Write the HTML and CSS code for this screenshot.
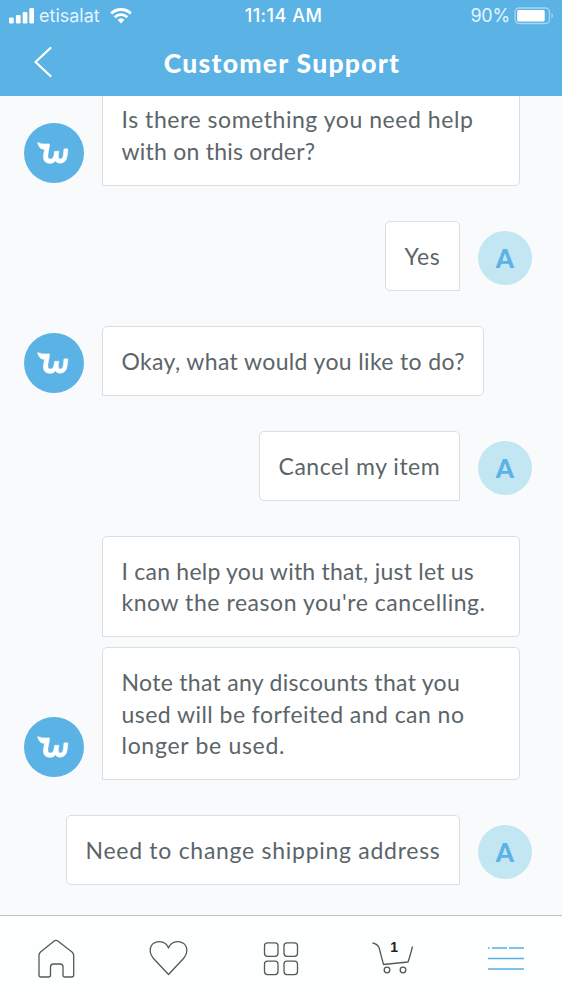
FILE: index.html
```html
<!DOCTYPE html>
<html lang="en">
<head>
<meta charset="utf-8">
<title>Customer Support</title>
<link rel="stylesheet" href="styles.css">
</head>
<body>
<svg class="defs" aria-hidden="true">
  <symbol id="wish" viewBox="0 0 60 60">
    <path d="M13.600 19.400 Q18.500 21.500 24.600 20.700 Q26 20.800 25.600 22.500 L24 31.500 Q23.500 36 26.300 36 Q29.400 36 30 31.500 L30.500 28.300 H35 L34.500 32 Q34 36 36.500 36 Q38.800 36 39.300 32 L39.800 26.300 Q41.500 25 44 26 L43.400 32 Q42.500 40.300 36 40.300 Q32.800 40.300 31.500 38 Q29.300 40.700 25.500 40.500 Q18.500 40 19.400 32 L20.500 26.500 Q14.500 26 13.600 19.400Z" fill="#fff" stroke="#fff" stroke-width=".4" stroke-linejoin="round"/>
  </symbol>
</svg>
<div class="screen">
  <header class="header">
    <div class="status">
      <div class="carrier">
        <svg class="signal" viewBox="0 0 26 16"><g fill="#fff"><rect x="0" y="9.500" width="4.700" height="6" rx="1.300"/><rect x="6.900" y="7" width="4.700" height="8.500" rx="1.300"/><rect x="13.700" y="4" width="4.700" height="11.500" rx="1.300"/><rect x="20.300" y="0" width="4.700" height="15.500" rx="1.300"/></g></svg>
        <span class="carrier-name">etisalat</span>
        <svg class="wifi" viewBox="0 0 22 16"><g fill="none" stroke="#fff" stroke-width="2.900"><path d="M1.200 5.500 A14 14 0 0 1 20.800 5.500"/><path d="M4.700 9.200 A9 9 0 0 1 17.300 9.200"/></g><path d="M7.500 11.800 Q11 8.800 14.500 11.800 L11 15.500Z" fill="#fff"/></svg>
      </div>
      <div class="clock">11:14 AM</div>
      <div class="power">
        <span class="percent">90%</span>
        <svg class="battery" viewBox="0 0 41 18"><rect x="1" y="1" width="34.500" height="15.500" rx="4" fill="none" stroke="#a6d6f4" stroke-width="1.300"/><rect x="3.200" y="3" width="27.500" height="11.500" rx="1.500" fill="#fff"/><path d="M37.500 6 Q40.500 8.800 37.500 11.500Z" fill="#a6d6f4"/></svg>
      </div>
    </div>
    <div class="titlebar">
      <svg class="back" viewBox="0 0 20 32"><path d="M17.500 2 L2.500 16 L17.500 30" fill="none" stroke="#fff" stroke-width="2.300" stroke-linecap="round" stroke-linejoin="round"/></svg>
      <h1 class="title">Customer Support</h1>
    </div>
  </header>
  <main class="chat">
    <div class="row bot">
      <div class="avatar brand"><svg><use href="#wish"/></svg></div>
      <div class="group"><p class="bubble wide"><span class="loose">Is there something you need help</span><br><span class="tight">with on this order?</span></p></div>
    </div>
    <div class="row user">
      <p class="bubble yes">Yes</p>
      <div class="avatar initial">A</div>
    </div>
    <div class="row bot">
      <div class="avatar brand"><svg><use href="#wish"/></svg></div>
      <div class="group"><p class="bubble question">Okay, what would you like to do?</p></div>
    </div>
    <div class="row user">
      <p class="bubble cancel">Cancel my item</p>
      <div class="avatar initial">A</div>
    </div>
    <div class="row bot">
      <div class="avatar brand"><svg><use href="#wish"/></svg></div>
      <div class="group">
        <p class="bubble wide"><span class="tight">I can help you with that, just let us</span><br><span class="loose">know the reason you're cancelling.</span></p>
        <p class="bubble wide"><span class="normal">Note that any discounts that you</span><br><span class="open">used will be forfeited and can no</span><br><span class="looser">longer be used.</span></p>
      </div>
    </div>
    <div class="row user">
      <p class="bubble address">Need to change shipping address</p>
      <div class="avatar initial">A</div>
    </div>
  </main>
  <nav class="tabs">
    <div class="tab"><svg viewBox="0 -4.500 112 84"><path d="M54.200 20.500 Q56 19.300 57.800 20.500 L72 31.500 Q73.700 33 73.700 35 V54.500 Q73.700 56.500 71.700 56.500 H65 Q63 56.500 63 54.500 V46.500 Q63 43.500 60 43.500 H53.500 Q50.500 43.500 50.500 46.500 V54.500 Q50.500 56.500 48.500 56.500 H41 Q39 56.500 39 54.500 V35 Q39 33 40.500 31.500Z"/></svg></div>
    <div class="tab"><svg viewBox="0 -4.500 112 84"><path d="M56.500 54 L41.500 38 C36.500 32 37.500 25 42.500 22.300 C48 19.500 54 21.500 56.500 27.500 C59 21.500 65 19.500 70.500 22.300 C75.500 25 76.500 32 71.500 38Z"/></svg></div>
    <div class="tab"><svg viewBox="0 -4.500 112 84"><rect x="39.500" y="22.300" width="13.500" height="13.500" rx="3"/><rect x="59" y="22.300" width="13.500" height="13.500" rx="3"/><rect x="39.500" y="40.600" width="13.500" height="13.500" rx="3"/><rect x="59" y="40.600" width="13.500" height="13.500" rx="3"/></svg></div>
    <div class="tab cart"><svg viewBox="0 -4.500 112 84"><path d="M35.500 22.500 Q40.500 23.500 42 27 L46.500 44 L71 41.500 Q73 36 75.500 26"/><circle cx="50" cy="49.500" r="2.800"/><circle cx="66" cy="49.500" r="2.800"/></svg><span class="count">1</span></div>
    <div class="tab menu"><svg viewBox="0 -5 112 84"><path d="M38 27 H39.500 M42 27 H57 M59 27 H74 M38 37.500 H74 M38 48 H74"/></svg></div>
  </nav>
</div>
</body>
</html>
```
FILE: styles.css
```css
* { box-sizing: border-box; }
body { margin: 0; }
.defs { display: none; }
.screen {
  width: 562px;
  height: 1000px;
  display: flex;
  flex-direction: column;
  overflow: hidden;
  background: #f8fafc;
  font-family: Lato, "Open Sans", sans-serif;
}
.header {
  height: 96px;
  flex: none;
  background: #5bb2e5;
  color: #fff;
  z-index: 1;
}
.status {
  height: 32px;
  padding: 0 7px 0 9px;
  display: grid;
  grid-template-columns: 1fr auto 1fr;
  align-items: center;
  font: 18px/32px Inter, sans-serif;
}
.carrier { display: flex; align-items: center; color: #e4f5ff; }
.signal { width: 26px; height: 16px; margin-right: 4px; }
.carrier-name { font-size: 18px; letter-spacing: 0; }
.wifi { width: 22px; height: 16px; margin-left: 10px; }
.clock { font-weight: 500; letter-spacing: 0.5px; padding-left: 3px; }
.power { display: flex; align-items: center; justify-content: flex-end; }
.percent { color: #e4f5ff; letter-spacing: -0.2px; }
.battery { width: 41px; height: 18px; margin-left: 4px; }
.titlebar {
  height: 64px;
  display: flex;
  align-items: center;
  padding: 0 33px;
}
.back { width: 20px; height: 32px; margin-bottom: 4px; }
.title {
  flex: 1;
  margin: 0 22px 2px 4px;
  text-align: center;
  font-size: 26.5px;
  line-height: 32px;
  font-weight: 900;
  letter-spacing: 1.25px;
  white-space: nowrap;
}
.chat {
  flex: 1;
  min-height: 0;
  display: flex;
  flex-direction: column;
  justify-content: flex-end;
  gap: 35px;
  padding: 0 30px 30px 24px;
}
.row { display: flex; align-items: flex-end; flex: none; gap: 18px; }
.user { justify-content: flex-end; }
.group { display: flex; flex-direction: column; gap: 10px; }
.avatar {
  flex: none;
  border-radius: 50%;
  display: flex;
  align-items: center;
  justify-content: center;
}
.brand { width: 60px; height: 60px; margin-bottom: 3px; background: #5bb2e5; }
.brand svg { width: 60px; height: 60px; }
.initial {
  width: 54px;
  height: 54px;
  margin-bottom: 6px;
  background: #c3e6f3;
  color: #5bb2e5;
  font-size: 26px;
  font-weight: 900;
}
.bubble {
  margin: 0;
  padding: 19px 18.5px 17.5px;
  border: 1px solid #d6dfe3;
  border-radius: 5px;
  background: #fff;
  color: #5b6569;
  font-size: 23px;
  line-height: 31.5px;
  letter-spacing: 0.3px;
  white-space: nowrap;
}
.bot .bubble { border-bottom-left-radius: 0; }
.user .bubble { border-bottom-right-radius: 0; }
.wide { width: 418px; }
.yes { width: 75px; letter-spacing: 0.6px; }
.question { width: 382px; letter-spacing: 0.36px; }
.cancel { width: 201px; letter-spacing: 0.52px; }
.address { width: 394px; letter-spacing: 0.72px; }
.tight { letter-spacing: 0.23px; }
.open { letter-spacing: 0.45px; }
.loose { letter-spacing: 0.55px; }
.looser { letter-spacing: 0.7px; }
.tabs {
  height: 85px;
  flex: none;
  display: grid;
  grid-template-columns: repeat(5, 1fr);
  border-top: 1px solid #bcc1c5;
  background: #fdfefe;
}
.tab { position: relative; }
.tab svg {
  display: block;
  width: 112px;
  height: 84px;
  fill: none;
  stroke: #55585a;
  stroke-width: 1.3;
  stroke-linejoin: round;
}
.menu svg { stroke: #5aaee3; stroke-width: 1.4; }
.count {
  position: absolute;
  left: 53px;
  top: 23px;
  font: 700 14px/16px "Liberation Sans", sans-serif;
  color: #222;
}
```
